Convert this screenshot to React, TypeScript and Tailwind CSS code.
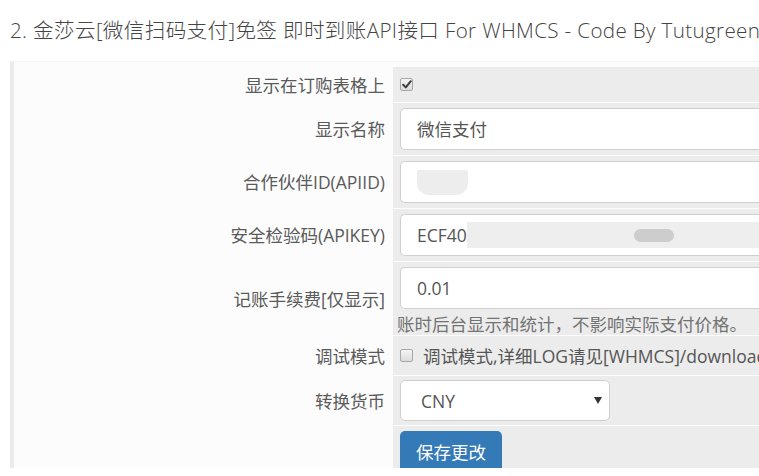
const FONT = "font-['Open_Sans','Noto_Sans_CJK_SC',sans-serif]";

function Checkbox({ checked = false }: { checked?: boolean }) {
  return (
    <span className="inline-flex h-[13px] w-[13px] shrink-0 items-center justify-center rounded-[2px] border border-[#a8a8a8] bg-gradient-to-b from-[#f4f4f4] to-[#dcdcdc]">
      {checked ? (
        <svg width="10" height="9" viewBox="0 0 10 9">
          <path d="M1.2 4.8 L3.8 7.4 L8.8 1.2" fill="none" stroke="#3a3a3a" strokeWidth="2" strokeLinecap="round" strokeLinejoin="round" />
        </svg>
      ) : null}
    </span>
  );
}

function Row({
  label,
  children,
  className = "",
}: {
  label: string;
  children: React.ReactNode;
  className?: string;
}) {
  return (
    <div className="flex">
      <div className="flex w-[379px] shrink-0 items-center justify-end pr-[8px] text-[#5a5a5a]">{label}</div>
      <div className={`min-w-0 flex-1 bg-[#ececec] ${className}`}>{children}</div>
    </div>
  );
}

function TextBox({ children }: { children?: React.ReactNode }) {
  return (
    <div className="flex h-[42px] w-[420px] items-center overflow-hidden rounded-l-[5px] border border-r-0 border-[#cfcfcf] bg-white pl-[16px] text-[#555]">
      {children}
    </div>
  );
}

export default function App() {
  return (
    <div className={`h-[476px] w-[759px] overflow-hidden bg-white text-[17.5px] leading-[22px] ${FONT}`}>
      <h3 className="whitespace-nowrap pl-[10px] pt-[19px] text-[20.6px] font-light leading-[22px] tracking-[0.35px] text-[#444]">
        2. 金莎云[微信扫码支付]免签 即时到账API接口 For WHMCS - Code By Tutugreen
      </h3>
      <div className="ml-[10px] mt-[20px] flex h-[407px] flex-col gap-[1px] overflow-hidden border-l-4 border-t border-[#ebebeb] border-t-[#f3f3f3] bg-[#fcfcfc] pt-[5px]">
        <Row label="显示在订购表格上" className="flex h-[35px] items-center pl-[7px]">
          <Checkbox checked />
        </Row>
        <Row label="显示名称" className="px-[7px] py-[5px]">
          <TextBox>微信支付</TextBox>
        </Row>
        <Row label="合作伙伴ID(APIID)" className="px-[7px] py-[5px]">
          <TextBox>
            <span className="block h-[25px] w-[51px] rounded-b-[12px] rounded-t-[2px] bg-[#ededed]" />
          </TextBox>
        </Row>
        <Row label="安全检验码(APIKEY)" className="px-[7px] py-[5px]">
          <TextBox>
            <span>ECF40</span>
            <span className="flex h-[26px] flex-1 items-center bg-[#eeeeee] pl-[167px]">
              <span className="block h-[13px] w-[40px] rounded-full bg-[#cdcdcd]" />
            </span>
          </TextBox>
        </Row>
        <div className="flex">
          <div className="flex w-[379px] shrink-0 items-center justify-end pr-[8px] text-[#5a5a5a]">记账手续费[仅显示]</div>
          <div className="min-w-0 flex-1 bg-[#ececec] pt-[5px]">
            <div className="pl-[7px]">
              <TextBox>0.01</TextBox>
            </div>
            <p className="mt-[4px] whitespace-nowrap pl-[4px] text-[#737373]">账时后台显示和统计，不影响实际支付价格。</p>
          </div>
        </div>
        <Row label="调试模式" className="flex h-[39px] items-center gap-[10px] overflow-hidden whitespace-nowrap pl-[7px] text-[#555]">
          <Checkbox />
          <span>调试模式,详细LOG请见[WHMCS]/download</span>
        </Row>
        <Row label="转换货币" className="px-[7px] py-[4px]">
          <div className="flex h-[41px] w-[210px] items-center justify-between rounded-[5px] border border-[#cfcfcf] bg-white pl-[20px] pr-[7px] text-[#555]">
            <span>CNY</span>
            <svg width="8" height="7" viewBox="0 0 8 7">
              <path d="M0 0 H8 L4 7 Z" fill="#333" />
            </svg>
          </div>
        </Row>
        <Row label="" className="flex-1 px-[7px] pt-[5px]">
          <button className="h-[42px] w-[102px] rounded-[5px] bg-[#337ab7] text-[17.5px] text-white">保存更改</button>
        </Row>
      </div>
    </div>
  );
}
